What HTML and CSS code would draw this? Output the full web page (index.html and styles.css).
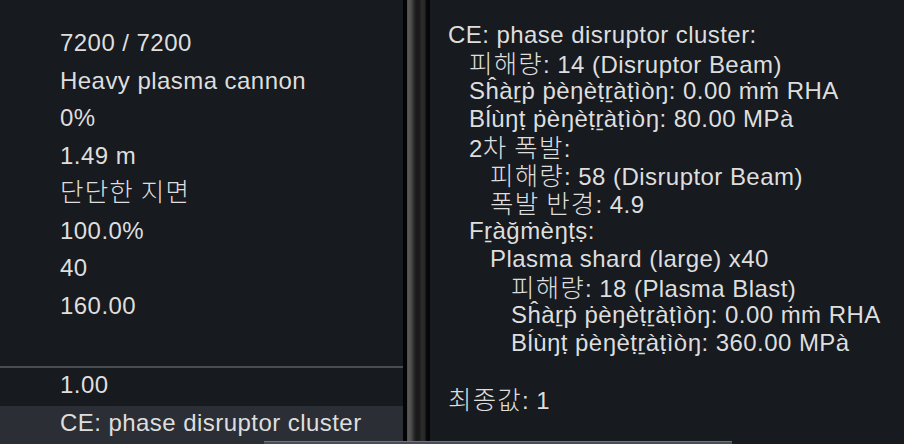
FILE: index.html
```html
<!DOCTYPE html>
<html>
<head>
<meta charset="utf-8">
<link rel="stylesheet" href="styles.css">
</head>
<body>
<div class="screen">
  <div class="left">
    <div class="values">
      <div class="val">7200 / 7200</div>
      <div class="val">Heavy plasma cannon</div>
      <div class="val">0%</div>
      <div class="val">1.49 m</div>
      <div class="val"><span class="ko">단단한 지면</span></div>
      <div class="val">100.0%</div>
      <div class="val">40</div>
      <div class="val">160.00</div>
    </div>
    <div class="rows">
      <div class="row">1.00</div>
      <div class="row selected">CE: phase disruptor cluster</div>
    </div>
  </div>
  <div class="divider"></div>
  <div class="right">
    <div class="ln l0">CE: phase disruptor cluster:</div>
    <div class="ln l1"><span class="ko">피해량</span>: 14 (Disruptor Beam)</div>
    <div class="ln l1">Sĥàṟṗ ṗèŋèṭṟàṭìòŋ: 0.00 ṁṁ RHA</div>
    <div class="ln l1">Bĺùŋṭ ṗèŋèṭṟàṭìòŋ: 80.00 MPà</div>
    <div class="ln l1">2<span class="ko">차 폭발</span>:</div>
    <div class="ln l2"><span class="ko">피해량</span>: 58 (Disruptor Beam)</div>
    <div class="ln l2"><span class="ko">폭발 반경</span>: 4.9</div>
    <div class="ln l1">Fṟàğṁèŋṭṣ:</div>
    <div class="ln l2">Plasma shard (large) x40</div>
    <div class="ln l3"><span class="ko">피해량</span>: 18 (Plasma Blast)</div>
    <div class="ln l3">Sĥàṟṗ ṗèŋèṭṟàṭìòŋ: 0.00 ṁṁ RHA</div>
    <div class="ln l3">Bĺùŋṭ ṗèŋèṭṟàṭìòŋ: 360.00 MPà</div>
    <div class="ln l0">&nbsp;</div>
    <div class="ln l0"><span class="ko">최종값</span>: 1</div>
  </div>
  <div class="hbar"></div>
</div>
</body>
</html>
```

FILE: styles.css
```css
html, body {
  margin: 0;
  padding: 0;
  background: #171a1f;
}
.screen {
  position: relative;
  width: 904px;
  height: 444px;
  overflow: hidden;
  display: flex;
  font-family: "Liberation Sans", "Noto Sans CJK KR", sans-serif;
  font-size: 24px;
  letter-spacing: 0.45px;
  color: #dedede;
}
.ko {
  font-family: "Noto Sans CJK KR", sans-serif;
  font-size: 25.5px;
  font-weight: 300;
  letter-spacing: 1.2px;
  line-height: 1;
}
.left {
  width: 403px;
  flex: none;
  background: #171a1f;
  display: flex;
  flex-direction: column;
}
.values {
  height: 370px;
  box-sizing: border-box;
  padding-top: 24px;
  padding-left: 60px;
  border-bottom: 2px solid #4b4c4f;
}
.val {
  height: 37.5px;
  line-height: 37.5px;
  white-space: nowrap;
}
.rows {
  display: flex;
  flex-direction: column;
}
.row {
  height: 38px;
  box-sizing: border-box;
  line-height: 33px;
  padding-left: 60px;
  white-space: nowrap;
}
.row.selected {
  background: #2b2f35;
}
.divider {
  width: 27px;
  flex: none;
  background: linear-gradient(to right,
    #030303 0px, #050505 4px,
    #4c4c4c 4px, #5a5a5a 6px, #444444 9px, #2a2a2a 11px,
    #1b1b1b 13px, #191919 16px, #2d2d2d 19px, #262626 22px,
    #0a0a0a 23px, #040404 27px);
}
.right {
  flex: 1;
  background: #171a1f;
  padding-top: 21px;
  padding-left: 18px;
}
.ln {
  height: 28px;
  line-height: 28px;
  white-space: nowrap;
}
.l1 { padding-left: 21px; }
.l2 { padding-left: 42px; }
.l3 { padding-left: 63px; }
.hbar {
  position: absolute;
  left: 264px;
  top: 441px;
  width: 468px;
  height: 3px;
  box-sizing: border-box;
  border-top: 1px solid #6b7483;
  background: #474e5a;
}
```
